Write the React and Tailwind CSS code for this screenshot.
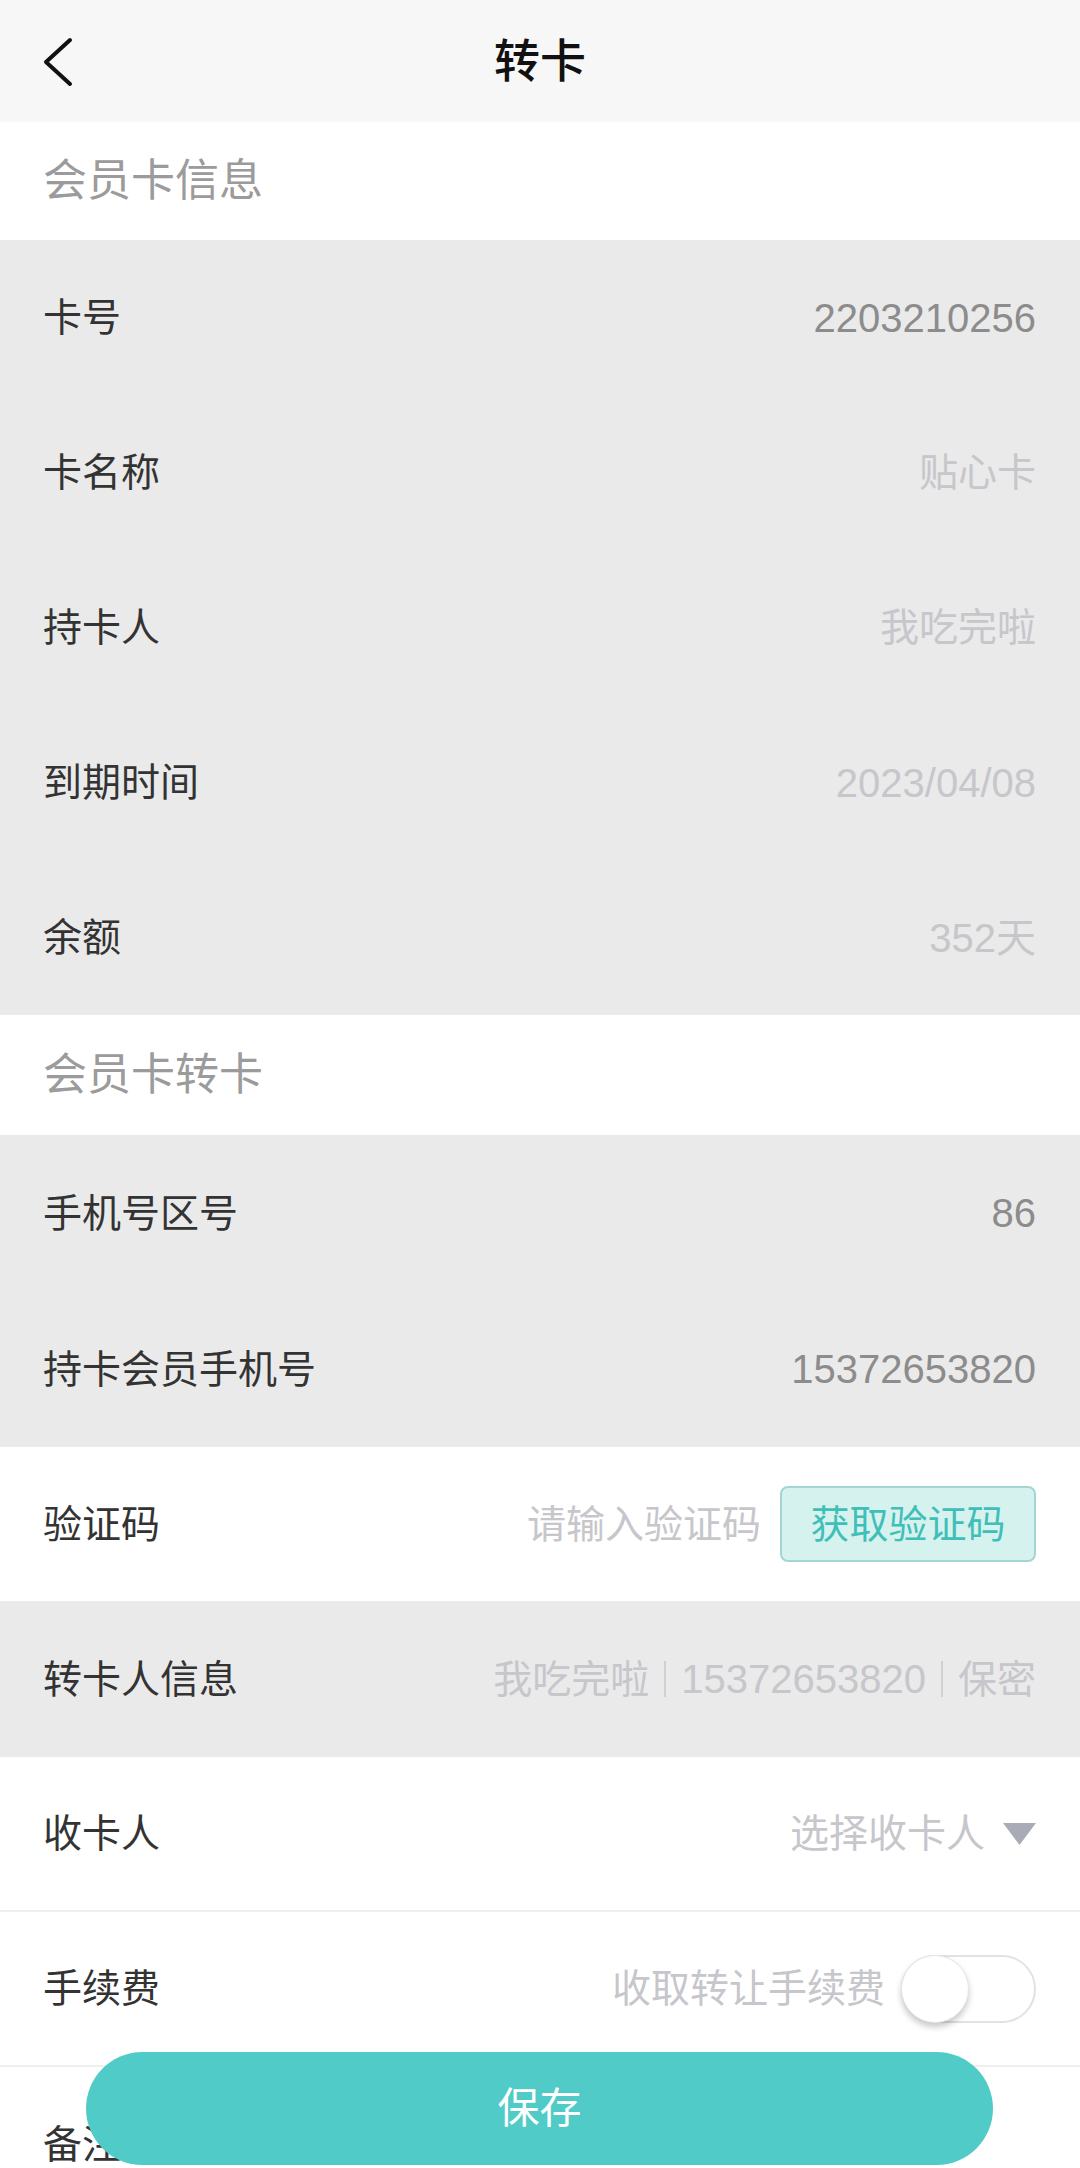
import React from "react";

const FONT = { fontFamily: '"Liberation Sans", "Noto Sans CJK SC", sans-serif' };

function Row({ label, children, bg = "bg-[#eaeaea]", border = false, h = "h-[155px]" }) {
  return (
    <div
      className={`flex items-center justify-between ${h} pl-[43px] pr-[44px] ${bg} ${
        border ? "border-b-2 border-[#efefef]" : ""
      }`}
    >
      <span className="text-[39px] leading-none text-[#333333]">{label}</span>
      <div className="flex items-center">{children}</div>
    </div>
  );
}

function Section({ title, h = "h-[118px]" }) {
  return (
    <div className={`flex items-center ${h} pl-[43px] bg-white`}>
      <span className="text-[44px] leading-none text-[#9b9b9b]">{title}</span>
    </div>
  );
}

const Dark = ({ children }) => (
  <span className="text-[40px] leading-none text-[#8c8c8c]">{children}</span>
);
const Light = ({ children, size = "text-[39px]" }) => (
  <span className={`${size} leading-none text-[#c6c6cb]`}>{children}</span>
);

export default function App() {
  return (
    <div
      className="relative w-[1080px] h-[2168px] overflow-hidden bg-white"
      style={FONT}
    >
      {/* Header */}
      <div className="relative flex items-center justify-center h-[122px] bg-[#f7f7f7]">
        <svg
          className="absolute left-[40px] top-[36px]"
          width="36"
          height="52"
          viewBox="0 0 36 52"
          fill="none"
        >
          <path
            d="M30 4 L6 26 L30 48"
            stroke="#111"
            strokeWidth="4"
            strokeLinecap="round"
            strokeLinejoin="round"
          />
        </svg>
        <span className="text-[46px] leading-none text-[#111] font-medium">转卡</span>
      </div>

      <Section title="会员卡信息" />
      <Row label="卡号">
        <Dark>2203210256</Dark>
      </Row>
      <Row label="卡名称">
        <Light>贴心卡</Light>
      </Row>
      <Row label="持卡人">
        <Light>我吃完啦</Light>
      </Row>
      <Row label="到期时间">
        <Light size="text-[40px]">2023/04/08</Light>
      </Row>
      <Row label="余额">
        <Light size="text-[40px]">352天</Light>
      </Row>

      <Section title="会员卡转卡" h="h-[120px]" />
      <Row label="手机号区号" h="h-[156px]">
        <Dark>86</Dark>
      </Row>
      <Row label="持卡会员手机号" h="h-[156px]">
        <Dark>15372653820</Dark>
      </Row>
      <Row label="验证码" bg="bg-white" h="h-[154px]">
        <Light>请输入验证码</Light>
        <div className="ml-[19px] flex items-center justify-center w-[256px] h-[76px] rounded-[8px] border-2 border-[#a3d6d0] bg-[#d6f2ef]">
          <span className="text-[39px] leading-none text-[#3fbfb7]">获取验证码</span>
        </div>
      </Row>
      <Row label="转卡人信息" h="h-[156px]">
        <Light>我吃完啦</Light>
        <span className="inline-block w-[2px] h-[36px] mx-[15px] bg-[#d0d0d4]" />
        <Light size="text-[40px]">15372653820</Light>
        <span className="inline-block w-[2px] h-[36px] mx-[15px] bg-[#d0d0d4]" />
        <Light>保密</Light>
      </Row>
      <Row label="收卡人" bg="bg-white" border>
        <Light>选择收卡人</Light>
        <svg className="ml-[18px]" width="33" height="22" viewBox="0 0 33 22">
          <path d="M0 0 H33 L16.5 22 Z" fill="#a9abb6" />
        </svg>
      </Row>
      <Row label="手续费" bg="bg-white" border>
        <Light>收取转让手续费</Light>
        <div className="relative ml-[16px] w-[135px] h-[68px] rounded-full border-2 border-[#e2e2e2] bg-white">
          <div className="absolute left-[-2px] top-[-2px] w-[68px] h-[68px] rounded-full bg-white border border-[#e6e6e6] shadow-[0_4px_6px_rgba(0,0,0,0.22)]" />
        </div>
      </Row>
      <Row label="备注" bg="bg-white" />

      {/* Save button */}
      <button className="absolute left-[86px] bottom-[3px] w-[907px] h-[113px] rounded-full bg-[#50cbc7] flex items-center justify-center">
        <span className="text-[42px] leading-none text-white">保存</span>
      </button>
    </div>
  );
}
